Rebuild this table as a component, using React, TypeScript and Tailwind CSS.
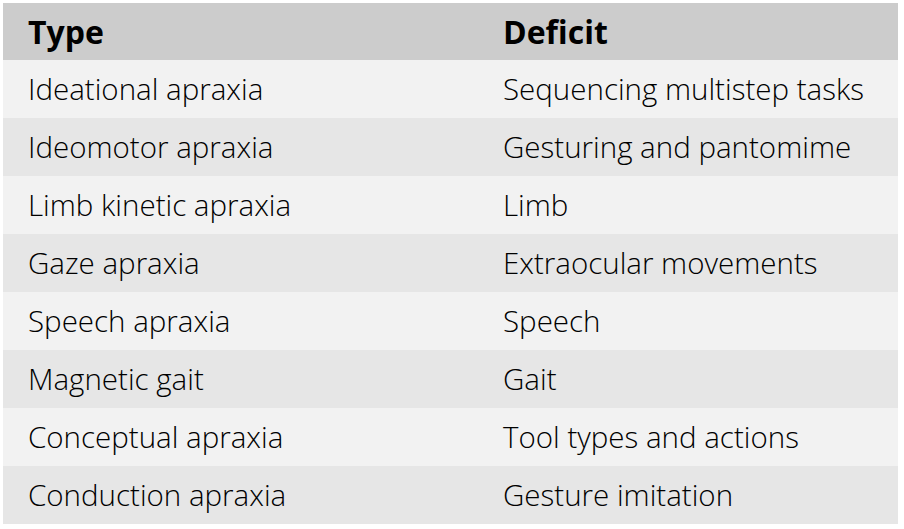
import React from "react";

const rows: [string, string][] = [
  ["Ideational apraxia", "Sequencing multistep tasks"],
  ["Ideomotor apraxia", "Gesturing and pantomime"],
  ["Limb kinetic apraxia", "Limb"],
  ["Gaze apraxia", "Extraocular movements"],
  ["Speech apraxia", "Speech"],
  ["Magnetic gait", "Gait"],
  ["Conceptual apraxia", "Tool types and actions"],
  ["Conduction apraxia", "Gesture imitation"],
];

export default function App() {
  return (
    <div className="w-[904px] h-[529px] bg-white pt-[3px] pl-[3px]" style={{ fontFamily: '"Open Sans", "Noto Sans", sans-serif' }}>
      <div className="w-[895px] flex flex-col text-black">
        <div className="grid grid-cols-[475px_1fr] h-[57px] items-center bg-[#cccccc] font-bold text-[32px] px-[25px]">
          <div>Type</div>
          <div>Deficit</div>
        </div>
        {rows.map(([a, b], i) => (
          <div
            key={i}
            className={`grid grid-cols-[475px_1fr] h-[58px] items-center px-[25px] text-[29.5px] font-light ${i % 2 === 0 ? "bg-[#f2f2f2]" : "bg-[#e6e6e6]"}`}
          >
            <div>{a}</div>
            <div>{b}</div>
          </div>
        ))}
      </div>
    </div>
  );
}
